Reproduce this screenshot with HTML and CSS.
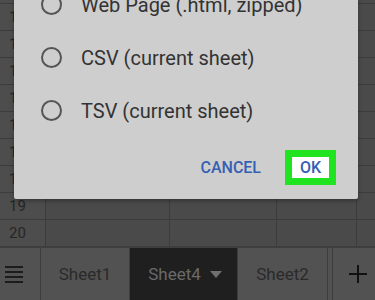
FILE: index.html
```html
<!DOCTYPE html>
<html lang="en">
<head>
    <meta charset="UTF-8">
    <meta name="viewport" content="width=device-width, initial-scale=1.0">
    <title>Download as</title>
    <link rel="stylesheet" href="styles.css">
</head>
<body>
    <div class="sheet">
        <div class="row"><div class="num">11</div><div class="cell c1"></div><div class="cell c2"></div><div class="cell c3"></div><div class="cell c4"></div></div>
        <div class="row"><div class="num">12</div><div class="cell c1"></div><div class="cell c2"></div><div class="cell c3"></div><div class="cell c4"></div></div>
        <div class="row"><div class="num">13</div><div class="cell c1"></div><div class="cell c2"></div><div class="cell c3"></div><div class="cell c4"></div></div>
        <div class="row"><div class="num">14</div><div class="cell c1"></div><div class="cell c2"></div><div class="cell c3"></div><div class="cell c4"></div></div>
        <div class="row"><div class="num">15</div><div class="cell c1"></div><div class="cell c2"></div><div class="cell c3"></div><div class="cell c4"></div></div>
        <div class="row"><div class="num">16</div><div class="cell c1"></div><div class="cell c2"></div><div class="cell c3"></div><div class="cell c4"></div></div>
        <div class="row"><div class="num">17</div><div class="cell c1"></div><div class="cell c2"></div><div class="cell c3"></div><div class="cell c4"></div></div>
        <div class="row"><div class="num">18</div><div class="cell c1"></div><div class="cell c2"></div><div class="cell c3"></div><div class="cell c4"></div></div>
        <div class="row"><div class="num">19</div><div class="cell c1"></div><div class="cell c2"></div><div class="cell c3"></div><div class="cell c4"></div></div>
        <div class="row"><div class="num">20</div><div class="cell c1"></div><div class="cell c2"></div><div class="cell c3"></div><div class="cell c4"></div></div>
    </div>

    <div class="tabs">
        <div class="tab menu">
            <svg width="18" height="18" viewBox="0 0 18 18">
                <rect x="0" y="1" width="18" height="2" fill="#1c1c1c"/>
                <rect x="0" y="6" width="18" height="2" fill="#1c1c1c"/>
                <rect x="0" y="11" width="18" height="2" fill="#1c1c1c"/>
                <rect x="0" y="16" width="18" height="2" fill="#1c1c1c"/>
            </svg>
        </div>
        <div class="tab sheet-tab">Sheet1</div>
        <div class="tab sheet-tab active">Sheet4 <span class="caret"></span></div>
        <div class="tab sheet-tab last">Sheet2</div>
        <div class="tab add">
            <svg width="18" height="18" viewBox="0 0 18 18">
                <rect x="8" y="0" width="2" height="18" fill="#111"/>
                <rect x="0" y="8" width="18" height="2" fill="#111"/>
            </svg>
        </div>
    </div>

    <div class="dialog">
        <label class="option"><span class="radio"></span>Web Page (.html, zipped)</label>
        <label class="option"><span class="radio"></span>CSV (current sheet)</label>
        <label class="option"><span class="radio"></span>TSV (current sheet)</label>
        <div class="actions">
            <span class="btn">CANCEL</span>
            <span class="btn ok">OK</span>
        </div>
    </div>
</body>
</html>
```

FILE: styles.css
```css
body {
    margin: 0;
    width: 375px;
    height: 300px;
    overflow: hidden;
    background-color: #4a4a4a;
    font-family: Roboto, "Liberation Sans", sans-serif;
    position: relative;
}
.sheet {
    height: 247px;
    display: flex;
    flex-direction: column;
    justify-content: flex-end;
    overflow: hidden;
}
.row {
    flex: 0 0 27px;
    display: flex;
    border-bottom: 1px solid #3c3c3c;
    box-sizing: border-box;
}
.num {
    width: 46px;
    flex: 0 0 46px;
    border-right: 1px solid #3c3c3c;
    box-sizing: border-box;
    background-color: #4d4d4d;
    color: #262626;
    font-size: 15px;
    line-height: 26px;
    padding-left: 9px;
}
.cell {
    border-right: 1px solid #3c3c3c;
    box-sizing: border-box;
}
.c1 { flex: 0 0 124px; }
.c2 { flex: 0 0 107px; }
.c3 { flex: 0 0 80px; }
.c4 { flex: 1; border-right: none; }

.tabs {
    height: 53px;
    display: flex;
    background-color: #525252;
    border-top: 1px solid #3f3f3f;
    box-sizing: border-box;
}
.tab {
    display: flex;
    align-items: center;
    justify-content: center;
    border-right: 1px solid #3d3d3d;
    box-sizing: border-box;
}
.menu {
    flex: 0 0 41px;
    justify-content: flex-start;
    padding-left: 5px;
}
.sheet-tab {
    flex: 0 0 89px;
    font-size: 17px;
    color: #2a2a2a;
}
.sheet-tab.active {
    flex: 0 0 108px;
    background-color: #1f1f1f;
    color: #6a6a6a;
    gap: 9px;
    padding-left: 3px;
}
.sheet-tab.last {
    flex: 0 0 90px;
}
.caret {
    width: 0;
    height: 0;
    border-left: 6px solid transparent;
    border-right: 6px solid transparent;
    border-top: 7px solid #707070;
}
.add {
    flex: 1;
    border-right: none;
    border-left: 1px solid #3d3d3d;
    margin-left: 4px;
    padding-left: 8px;
}

.dialog {
    position: absolute;
    left: 14px;
    top: -22px;
    width: 344px;
    background-color: #cecece;
    border-radius: 2px;
    box-shadow: 0 2px 4px rgba(0, 0, 0, 0.3);
}
.option {
    height: 53px;
    display: flex;
    align-items: center;
    padding-left: 27px;
    font-size: 20px;
    color: #333;
}
.radio {
    width: 21px;
    height: 21px;
    border: 2px solid #555;
    border-radius: 50%;
    box-sizing: border-box;
    margin-right: 19px;
}
.actions {
    height: 62px;
    display: flex;
    justify-content: flex-end;
    align-items: flex-start;
    padding-right: 22px;
    padding-top: 13px;
    box-sizing: border-box;
    gap: 24px;
}
.btn {
    font-size: 16px;
    font-weight: 500;
    color: #3560b3;
    line-height: 35px;
}
.ok {
    background-color: #fff;
    border: 7px solid #21e421;
    width: 51px;
    height: 35px;
    line-height: 21px;
    box-sizing: border-box;
    text-align: center;
}
```
